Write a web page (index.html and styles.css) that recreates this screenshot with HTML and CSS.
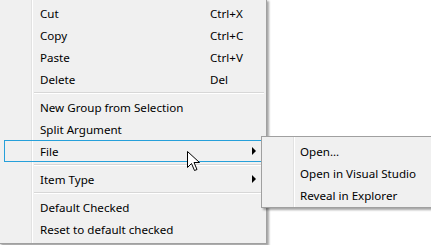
FILE: index.html
```html
<!DOCTYPE html>
<html lang="en">
<head>
  <meta charset="UTF-8">
  <title>Context Menu</title>
  <link rel="stylesheet" href="styles.css">
</head>
<body>
  <div class="stage">
    <div class="menu main-menu">
      <div class="item"><span class="label">Cut</span><span class="key">Ctrl+X</span></div>
      <div class="item"><span class="label">Copy</span><span class="key">Ctrl+C</span></div>
      <div class="item"><span class="label">Paste</span><span class="key">Ctrl+V</span></div>
      <div class="item"><span class="label">Delete</span><span class="key">Del</span></div>
      <div class="sep"></div>
      <div class="item"><span class="label">New Group from Selection</span></div>
      <div class="item"><span class="label">Split Argument</span></div>
      <div class="item active"><span class="label">File</span><span class="arrow"></span></div>
      <div class="sep"></div>
      <div class="item"><span class="label">Item Type</span><span class="arrow"></span></div>
      <div class="sep"></div>
      <div class="item"><span class="label">Default Checked</span></div>
      <div class="item"><span class="label">Reset to default checked</span></div>
    </div>

    <div class="menu sub-menu">
      <div class="item"><span class="label">Open...</span></div>
      <div class="item"><span class="label">Open in Visual Studio</span></div>
      <div class="item"><span class="label">Reveal in Explorer</span></div>
    </div>

    <!-- mouse pointer -->
    <svg class="cursor" width="14" height="22" viewBox="0 0 14 22">
      <path d="M0.5,0.5 L0.5,16.5 L4.5,12.5 L7.5,19.5 L10,18.5 L7,11.5 L12.5,11.5 Z" fill="#fff" stroke="#000" stroke-width="1" stroke-linejoin="miter"/>
    </svg>
  </div>
</body>
</html>
```

FILE: styles.css
```css
body {
  margin: 0;
  background: #ffffff;
  font-family: 'Segoe UI', 'Noto Sans', 'Open Sans', sans-serif;
  font-size: 11.6px;
  color: #000;
  overflow: hidden;
}

.stage {
  position: relative;
  width: 431px;
  height: 246px;
}

.menu {
  background: #f0f0f0;
  border: 1px solid #a0a0a0;
  box-shadow: 2px 2px 2px rgba(0, 0, 0, 0.35);
  position: relative;
}

/* gutter line left of the labels */
.menu::before {
  content: "";
  position: absolute;
  top: 0;
  bottom: 0;
  left: 31px;
  width: 1px;
  background: #e2e2e2;
  border-right: 1px solid #ffffff;
}

.main-menu {
  width: 266px;
  margin: -1px 0 0 -1px;
  padding: 2px 0 3px 0;
}

.item {
  height: 22px;
  display: flex;
  align-items: center;
  margin: 0 2px 0 4px;
  padding-left: 35px;
  border: 1px solid transparent;
  box-sizing: border-box;
  position: relative;
  white-space: nowrap;
}

.item.active {
  border-color: #26a0da;
}

.label {
  flex: 1;
}

.key {
  width: 53px;
}

.arrow {
  width: 0;
  height: 0;
  border-top: 4px solid transparent;
  border-bottom: 4px solid transparent;
  border-left: 4px solid #000;
  margin-right: 7px;
}

.sep {
  height: 1px;
  background: #d7d7d7;
  border-bottom: 1px solid #ffffff;
  margin: 2px 2px 2px 34px;
}

.sub-menu {
  position: absolute;
  left: 261px;
  top: 137px;
  width: 180px;
  height: 64px;
  padding: 3px 0;
}

.sub-menu .item {
  padding-left: 33px;
}

.cursor {
  position: absolute;
  left: 187px;
  top: 152px;
}
```
